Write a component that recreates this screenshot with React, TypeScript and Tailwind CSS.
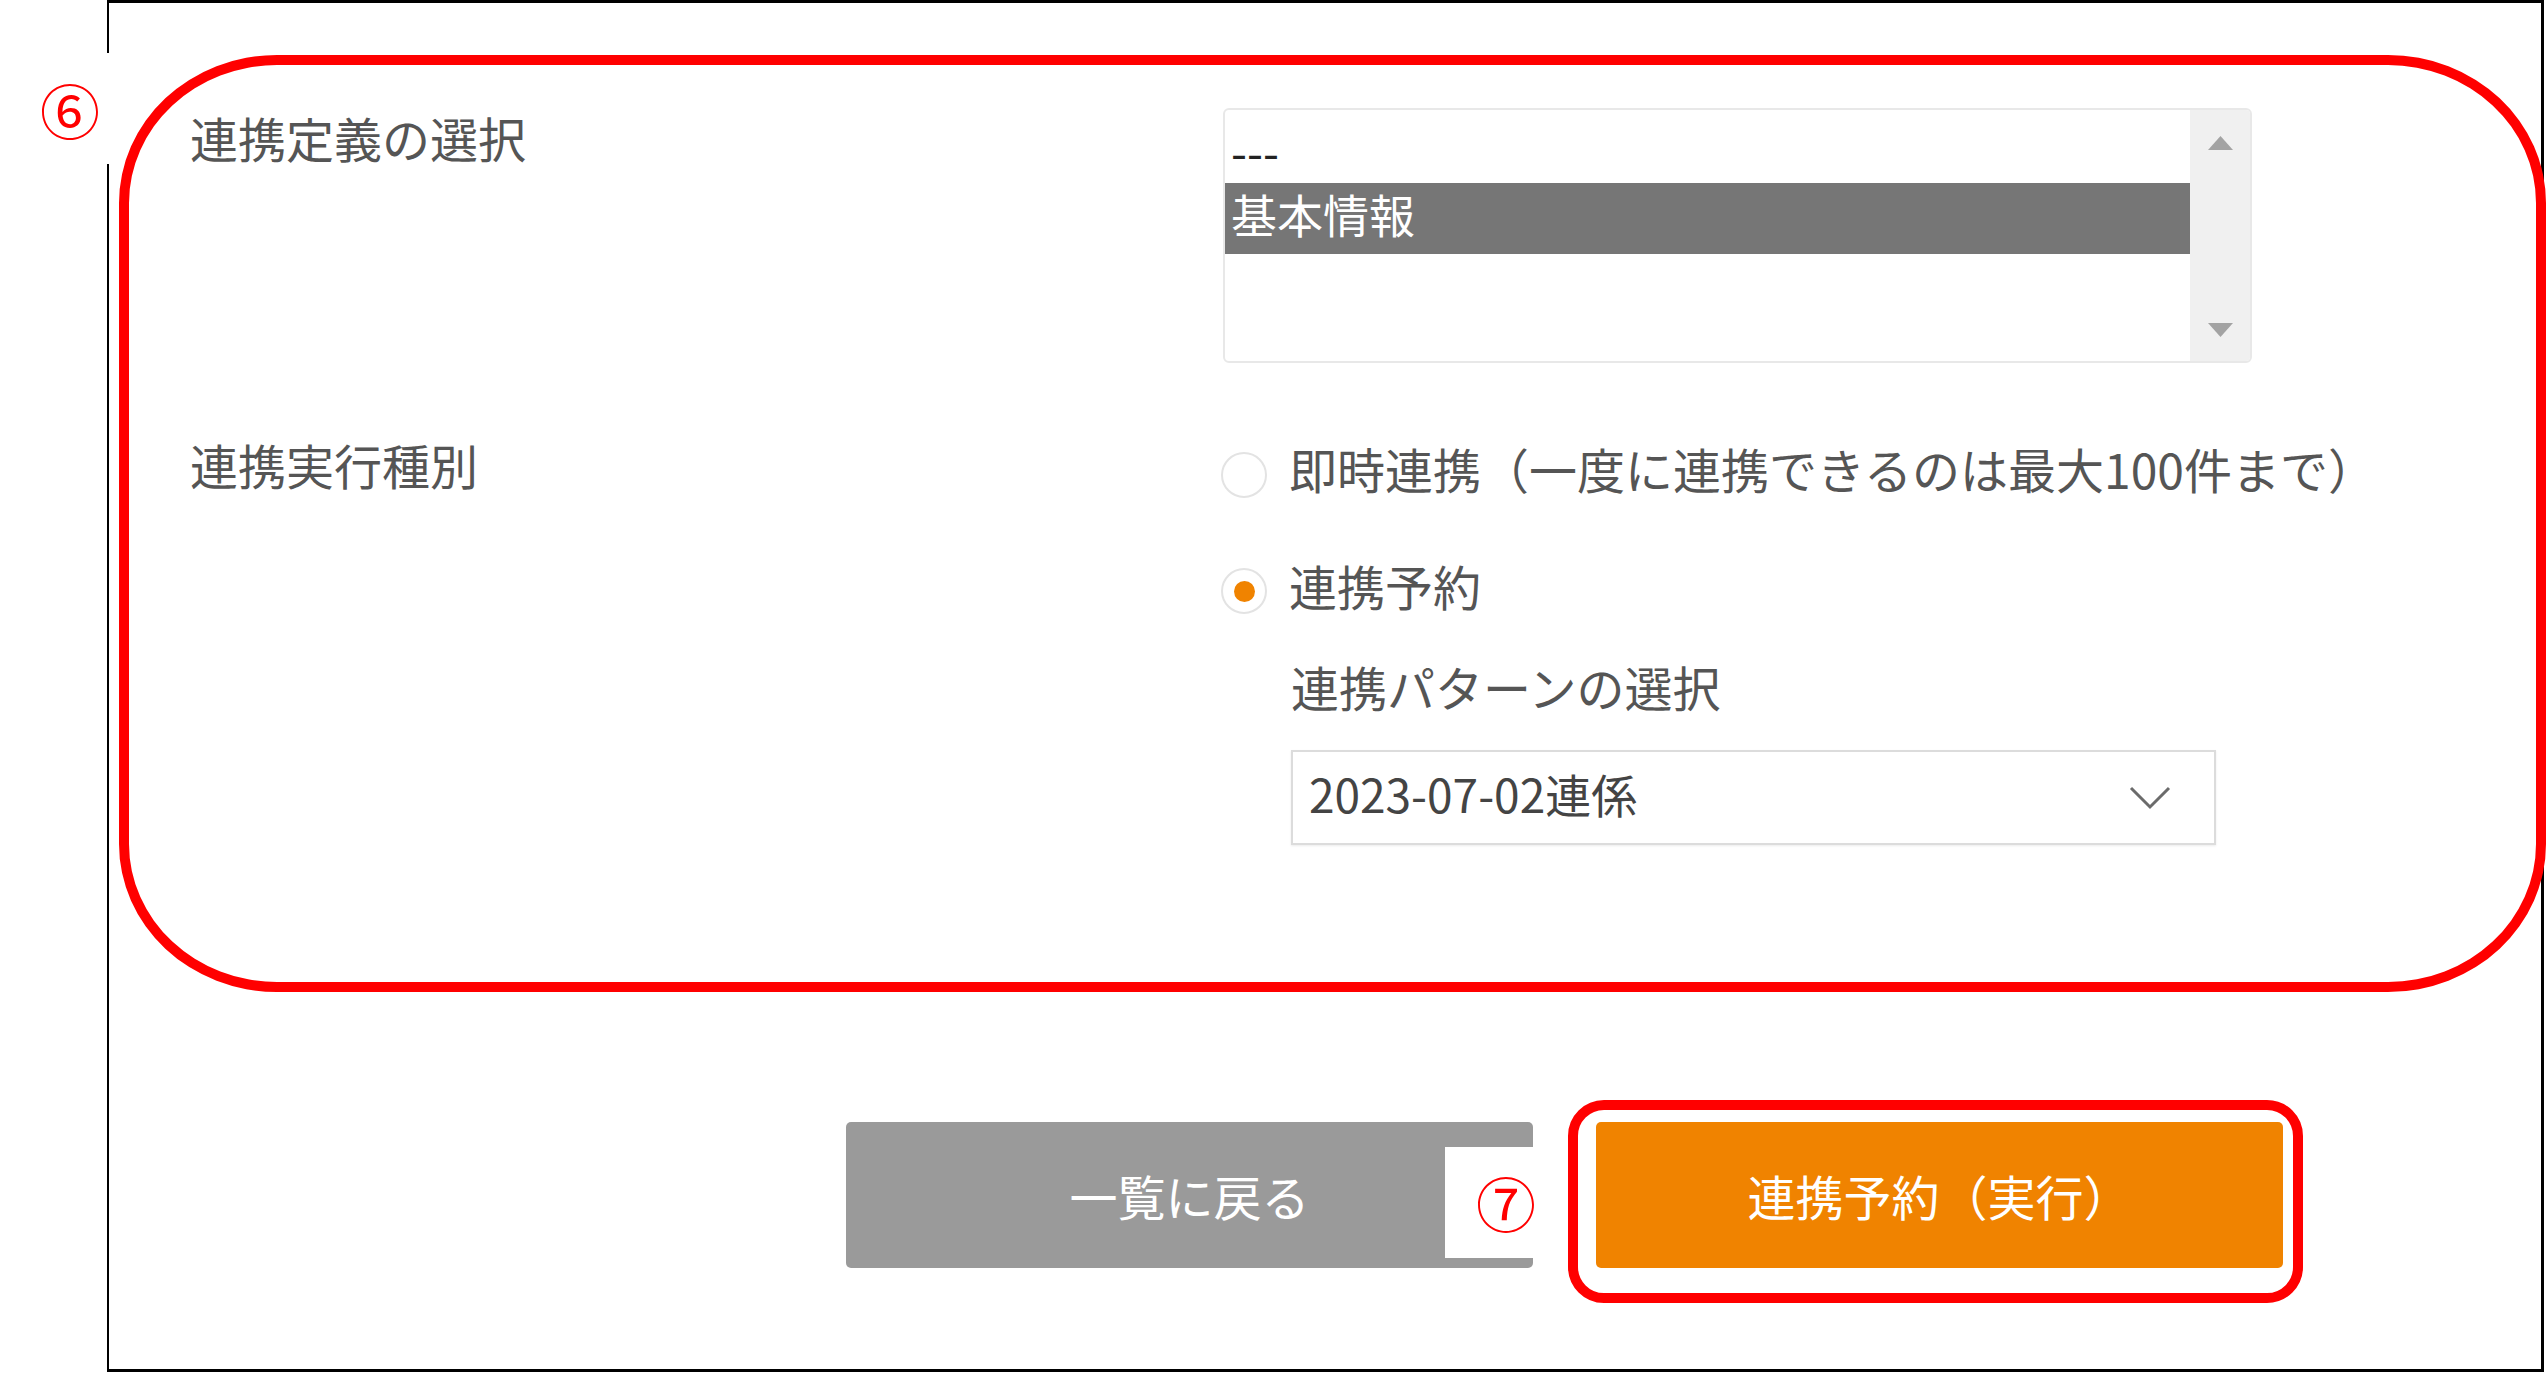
import React from 'react';

// 連携設定フォーム（注釈付きスクリーンショットの再現）
function ListBox() {
  return (
    <div className="ml-[2px] flex h-[255px] w-[1029px] overflow-hidden rounded-[6px] border-2 border-[#e8e8e8]">
      <div className="flex-1 pt-[2px]">
        <div className="flex h-[71px] items-center pl-[6px] pt-[4px] text-[46px] leading-none text-[#222]">---</div>
        <div className="flex h-[71px] items-center bg-[#767676] pb-[12px] pl-[6px] text-[46px] leading-none text-white">基本情報</div>
      </div>
      <div className="flex w-[60px] flex-col items-center justify-between bg-[#f0f0f0] pt-[26px] pb-[24px]">
        <svg width="25" height="14" viewBox="0 0 25 14">
          <polygon points="12.5,0 25,14 0,14" fill="#a3a3a3" />
        </svg>
        <svg width="25" height="14" viewBox="0 0 25 14">
          <polygon points="0,0 25,0 12.5,14" fill="#a3a3a3" />
        </svg>
      </div>
    </div>
  );
}

function Radio({ checked }: { checked?: boolean }) {
  return (
    <span className="flex h-[46px] w-[46px] shrink-0 items-center justify-center rounded-full border-2 border-[#e3e3e3] bg-white">
      {checked && <span className="h-[21px] w-[21px] rounded-full bg-[#f08300]" />}
    </span>
  );
}

export default function App() {
  return (
    <div className="relative h-[1373px] w-[2546px] overflow-hidden bg-white font-['Noto_Sans_CJK_JP',sans-serif] text-[#555]">
      <div className="ml-[107px] h-[1372px] w-[2437px] border-[3px] border-l-2 border-black">
        {/* ⑥ 範囲 */}
        <section className="ml-[10px] mt-[52px] h-[937px] w-[2427px] rounded-[158px/148px] border-[10px] border-[#ff0000] pl-[61px] pt-[43px]">
          <div className="flex">
            <div className="mt-[5px] w-[1031px] text-[48px] leading-[48px]">連携定義の選択</div>
            <ListBox />
          </div>

          <div className="mt-[77px] flex">
            <div className="w-[1031px] text-[48px] leading-[48px]">連携実行種別</div>
            <div className="pt-[4px]">
              <div className="flex items-start">
                <span className="mt-[8px]">
                  <Radio />
                </span>
                <span className="ml-[22px] text-[48px] leading-[48px]">即時連携（一度に連携できるのは最大100件まで）</span>
              </div>
              <div className="mt-[63px] flex items-start">
                <span className="mt-[7px]">
                  <Radio checked />
                </span>
                <span className="ml-[22px] text-[48px] leading-[48px]">連携予約</span>
              </div>
              <div className="ml-[70px] mt-[48px] text-[48px] leading-[48px]">連携パターンの選択</div>
              <div className="ml-[70px] mt-[40px] flex h-[95px] w-[925px] items-center justify-between border-2 border-[#dcdcdc] pl-[16px] pr-[43px] shadow-[0_1px_2px_rgba(0,0,0,0.08)]">
                <span className="mb-[10px] text-[46px] leading-none text-[#444]">2023-07-02連係</span>
                <svg width="42" height="24" viewBox="0 0 42 24">
                  <polyline points="2,2 21,21 40,2" fill="none" stroke="#6b6b6b" strokeWidth="3" />
                </svg>
              </div>
            </div>
          </div>
        </section>

        <div className="ml-[737px] mt-[108px] flex items-start">
          <button className="relative mt-[22px] flex h-[146px] w-[687px] items-center justify-center rounded-[5px] bg-[#9a9a9a] text-[48px] leading-none text-white">
            一覧に戻る
            <span className="absolute right-0 top-[25px] h-[111px] w-[88px] bg-white" />
            <span className="absolute left-[630px] top-[50px] text-[60px] leading-none text-[#ff0000]">⑦</span>
          </button>
          {/* ⑦ 範囲 */}
          <div className="ml-[35px] h-[203px] w-[735px] rounded-[36px] border-[10px] border-[#ff0000] pl-[18px] pt-[12px]">
            <button className="flex h-[146px] w-[687px] items-center justify-center rounded-[5px] bg-[#f08300] text-[48px] leading-none text-white">
              連携予約（実行）
            </button>
          </div>
        </div>
      </div>

      <div className="absolute left-[30px] top-[53px] h-[111px] w-[85px] bg-white">
        <span className="absolute left-[10px] top-[26px] text-[60px] leading-none text-[#ff0000]">⑥</span>
      </div>
    </div>
  );
}
